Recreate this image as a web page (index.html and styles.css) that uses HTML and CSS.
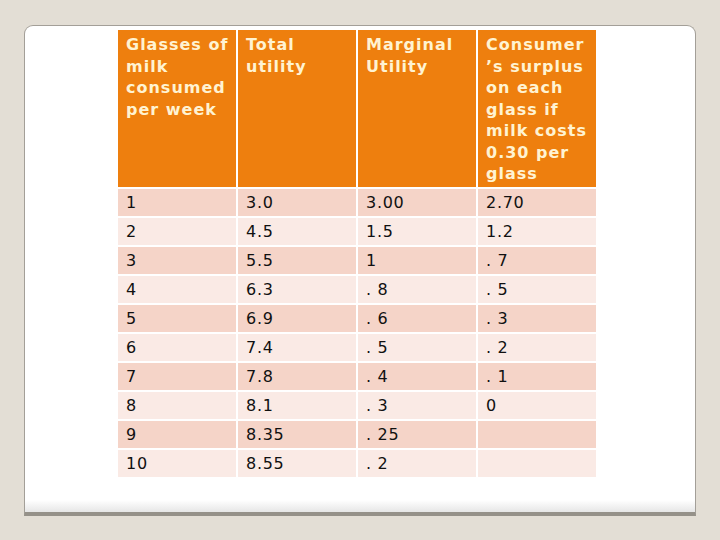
FILE: index.html
```html
<!DOCTYPE html>
<html>
<head>
<meta charset="utf-8">
<link rel="stylesheet" href="styles.css">
</head>
<body>
<div class="card">
  <table class="grid">
    <thead>
      <tr>
        <th>Glasses of milk consumed per week</th>
        <th>Total utility</th>
        <th>Marginal Utility</th>
        <th>Consumer ’s surplus on each glass if milk costs 0.30 per glass</th>
      </tr>
    </thead>
    <tbody>
      <tr><td>1</td><td>3.0</td><td>3.00</td><td>2.70</td></tr>
      <tr><td>2</td><td>4.5</td><td>1.5</td><td>1.2</td></tr>
      <tr><td>3</td><td>5.5</td><td>1</td><td>. 7</td></tr>
      <tr><td>4</td><td>6.3</td><td>. 8</td><td>. 5</td></tr>
      <tr><td>5</td><td>6.9</td><td>. 6</td><td>. 3</td></tr>
      <tr><td>6</td><td>7.4</td><td>. 5</td><td>. 2</td></tr>
      <tr><td>7</td><td>7.8</td><td>. 4</td><td>. 1</td></tr>
      <tr><td>8</td><td>8.1</td><td>. 3</td><td>0</td></tr>
      <tr><td>9</td><td>8.35</td><td>. 25</td><td></td></tr>
      <tr><td>10</td><td>8.55</td><td>. 2</td><td></td></tr>
    </tbody>
  </table>
</div>
</body>
</html>
```

FILE: styles.css
```css
html, body {
  margin: 0;
  padding: 0;
}
body {
  background: #e3ded5;
  width: 720px;
  height: 540px;
  overflow: hidden;
  padding-top: 25px;
  box-sizing: border-box;
}
.card {
  margin-left: 24px;
  width: 672px;
  height: 491px;
  box-sizing: border-box;
  border: 1px solid #a39f98;
  border-bottom: 4px solid #959189;
  border-radius: 9px 9px 0 0;
  background: linear-gradient(to bottom, #ffffff calc(100% - 12px), #e6e6e6 100%);
  padding: 2px 0 0 91px;
}
.grid {
  border-collapse: separate;
  border-spacing: 2px;
  font-family: "DejaVu Sans", Verdana, sans-serif;
  font-size: 16px;
}
.grid th {
  background: #ee7f0e;
  color: #fff3d2;
  font-weight: bold;
  text-align: left;
  vertical-align: top;
  width: 107px;
  padding: 4px 3px 2px 8px;
  line-height: 21.5px;
  letter-spacing: 1px;
}
.grid td {
  height: 27px;
  padding: 0 7px 0 8px;
  color: #111;
  line-height: 27px;
  letter-spacing: 0.7px;
}
.grid tbody tr:nth-child(odd) td {
  background: #f5d4c8;
}
.grid tbody tr:nth-child(even) td {
  background: #faeae5;
}
```
